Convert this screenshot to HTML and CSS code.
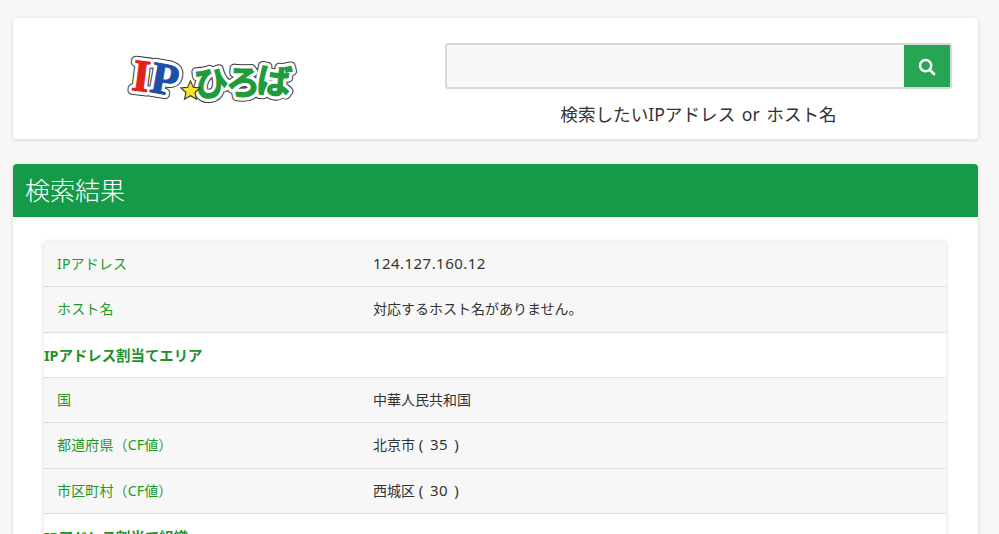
FILE: index.html
```html
<!DOCTYPE html>
<html lang="ja">
<head>
<meta charset="utf-8">
<title>IPひろば</title>
<link rel="stylesheet" href="styles.css">
</head>
<body>
<header class="top card">
  <div class="logo-wrap">
    <svg class="logo" width="170" height="50" viewBox="6 1 158 46.5" role="img" aria-label="IPひろば">
      <defs>
        <g id="letters">
          <text x="11" y="36" class="big red" transform="rotate(7 25 23)">I</text>
          <text x="28" y="39" class="big blue" transform="rotate(10 45 27)">P</text>
          <text x="68" y="40" class="kana green" transform="rotate(-3 84 28)">ひ</text>
          <text x="98" y="39" class="kana green" transform="rotate(3 112 28)">ろ</text>
          <text x="127" y="38" class="kana green" transform="rotate(6 145 26)">ば</text>
        </g>
      </defs>
      <use href="#letters" class="halo-dark"/>
      <use href="#letters" class="halo-white"/>
      <use href="#letters"/>
      <polygon class="star" points="65,26 67.6,32 74,32.6 69.2,36.8 70.6,43 65,39.8 59.4,43 60.8,36.8 56,32.6 62.4,32"/>
    </svg>
  </div>
  <div class="search">
    <div class="search-box">
      <div class="search-input"></div>
      <button class="search-btn" aria-label="検索">
        <svg width="18" height="18" viewBox="0 0 18 18"><circle cx="7.6" cy="7.6" r="5.6" fill="none" stroke="#fff" stroke-width="2.5"/><path d="M11.8 11.8 16 16" stroke="#fff" stroke-width="2.8" stroke-linecap="round"/></svg>
      </button>
    </div>
    <p class="search-note">検索したいIPアドレス or ホスト名</p>
  </div>
</header>

<section class="panel card">
  <h2 class="panel-title">検索結果</h2>
  <div class="panel-body">
    <div class="table">
      <div class="row"><div class="label">IPアドレス</div><div class="value"><span class="num">124.127.160.12</span></div></div>
      <div class="row"><div class="label">ホスト名</div><div class="value">対応するホスト名がありません。</div></div>
      <div class="row section">IPアドレス割当てエリア</div>
      <div class="row"><div class="label">国</div><div class="value">中華人民共和国</div></div>
      <div class="row"><div class="label">都道府県（CF値）</div><div class="value">北京市 <span class="num wide">( 35 )</span></div></div>
      <div class="row"><div class="label">市区町村（CF値）</div><div class="value">西城区 <span class="num wide">( 30 )</span></div></div>
      <div class="row section">IPアドレス割当て組織</div>
    </div>
  </div>
</section>
</body>
</html>
```
FILE: styles.css
```css
* { box-sizing: border-box; }
html, body { height: 534px; overflow: hidden; }
body {
  margin: 0;
  padding: 18px 21px 0 13px;
  background: #f7f7f7;
  color: #333;
  font-family: "Noto Sans", "Noto Sans CJK JP", sans-serif;
}
.card {
  background: #fff;
  border-radius: 4px;
  box-shadow: 0 1px 4px rgba(0,0,0,.14);
}
.top {
  height: 121px;
  display: grid;
  grid-template-columns: 432px 507px;
  padding-top: 25px;
}
.logo-wrap { display: flex; justify-content: center; padding: 11px 34px 0 0; }
.logo { display: block; overflow: visible; }

.big { font: 700 42px "Liberation Serif", serif; }
.kana { font: 700 32px "Noto Sans CJK JP", sans-serif; }
#letters text {
  fill: var(--fill, var(--own));
  stroke: var(--line, var(--own));
  stroke-width: var(--w, 1px);
  stroke-linejoin: round;
}
.red { --own: #e2231a; }
.blue { --own: #1d4fa8; }
.green { --own: #1f9a3c; }
.halo-dark { --fill: #3a3a3a; --line: #3a3a3a; --w: 9px; }
.halo-white { --fill: #fff; --line: #fff; --w: 7px; }
.star { fill: #f7e32b; stroke: #333; stroke-width: 1px; }

.search-box {
  height: 46px;
  display: flex;
  justify-content: space-between;
  align-items: stretch;
  background: #f8f8f8;
  border: 2px solid #d8d8d8;
  border-radius: 3px;
}
.search-input { flex: 1; }
.search-btn {
  width: 46px;
  border: 0;
  padding: 1px 0 0;
  background: #26a552;
  display: flex;
  align-items: center;
  justify-content: center;
}
.search-note {
  margin: 12px 0 0;
  text-align: center;
  font-size: 17.6px;
  line-height: 26px;
  word-spacing: 2px;
  color: #333;
}
.panel { margin-top: 25px; height: 400px; }
.panel-title {
  margin: 0;
  height: 53px;
  padding-left: 12px;
  background: #169a4a;
  color: #fff;
  font-size: 25px;
  font-weight: 300;
  line-height: 53px;
  border-radius: 4px 4px 0 0;
}
.panel-body { padding: 25px 32px 0 31px; }
.table {
  background: #fff;
  border-radius: 2px;
  box-shadow: 0 0 4px rgba(0,0,0,.16);
}
.row {
  display: flex;
  align-items: center;
  height: 45.33px;
  padding-bottom: 2px;
  background: #f7f7f7;
  border-bottom: 1px dotted #c8c8c8;
  font-size: 14px;
}
.label {
  width: 329px;
  padding-left: 13px;
  color: #1f9a1f;
  letter-spacing: .15px;
}
.value { color: #333; }
.num { font-size: 15px; letter-spacing: .45px; }
.wide { word-spacing: 2px; }
.row.section {
  padding-bottom: 0;
  background: #fff;
  color: #22902a;
  font-size: 14.4px;
  font-weight: 700;
}
```
